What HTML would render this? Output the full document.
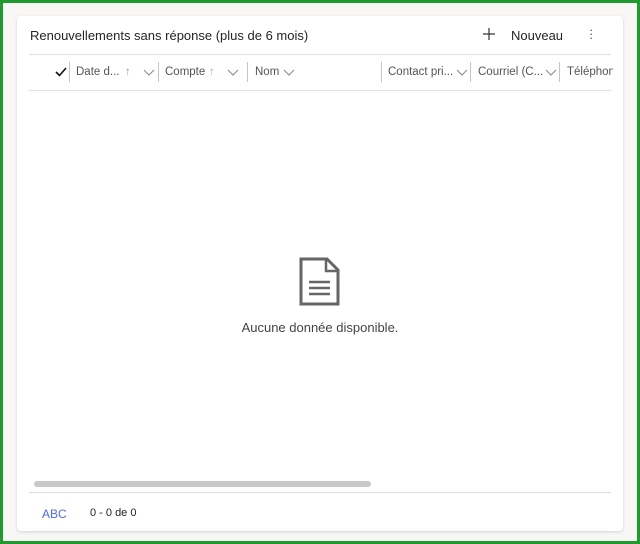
<!DOCTYPE html>
<html><head><meta charset="utf-8"><style>
*{margin:0;padding:0;box-sizing:border-box}
html,body{width:640px;height:544px;overflow:hidden}
body{background:#f8f7f6;border:3px solid #1f9a2e;font-family:"Liberation Sans",sans-serif;position:relative}
.card{position:absolute;left:14px;top:13px;width:606px;height:515px;background:#fff;border-radius:4px;box-shadow:0 1px 3px rgba(0,0,0,.15)}
.a{position:absolute;white-space:nowrap}
.h{font-size:11.5px;color:#555;top:49px;line-height:14px}
.sep{position:absolute;top:46px;width:1px;height:20px;background:#c8c6c4}
.chev{position:absolute;top:53px}
</style></head><body>
<div class="card">
<div class="a" style="left:13px;top:12px;font-size:13px;color:#242424">Renouvellements sans réponse (plus de 6 mois)</div>
<svg class="a" style="left:465px;top:11px" width="14" height="14"><path d="M7 1v12M1 7h12" stroke="#333" stroke-width="1.2"/></svg>
<div class="a" style="left:494px;top:12px;font-size:13px;color:#242424">Nouveau</div>
<div class="a" style="left:572px;top:12px;font-size:13px;color:#555;line-height:4px">·<br>·<br>·</div>
<div class="a" style="left:12px;top:38px;width:582px;height:1px;background:#e1dfdd"></div>
<svg class="a" style="left:38px;top:51px" width="12" height="10"><path d="M1 5l3.5 3.5L11 1" stroke="#111" stroke-width="1.6" fill="none"/></svg>
<div class="sep" style="left:52px"></div>
<div class="a h" style="left:59px">Date d...</div>
<div class="a h" style="left:108px;color:#999">↑</div>
<svg class="chev" style="left:126px" width="12" height="8"><path d="M1 1l5 5 5-5" stroke="#888" fill="none"/></svg>
<div class="sep" style="left:141px"></div>
<div class="a h" style="left:148px">Compte</div>
<div class="a h" style="left:192px;color:#c8a07a">↑</div>
<svg class="chev" style="left:210px" width="12" height="8"><path d="M1 1l5 5 5-5" stroke="#888" fill="none"/></svg>
<div class="sep" style="left:230px"></div>
<div class="a h" style="left:238px">Nom</div>
<svg class="chev" style="left:266px" width="12" height="8"><path d="M1 1l5 5 5-5" stroke="#888" fill="none"/></svg>
<div class="sep" style="left:364px"></div>
<div class="a h" style="left:371px">Contact pri...</div>
<svg class="chev" style="left:439px" width="12" height="8"><path d="M1 1l5 5 5-5" stroke="#888" fill="none"/></svg>
<div class="sep" style="left:453px"></div>
<div class="a h" style="left:461px">Courriel (C...</div>
<svg class="chev" style="left:528px" width="12" height="8"><path d="M1 1l5 5 5-5" stroke="#888" fill="none"/></svg>
<div class="sep" style="left:542px"></div>
<div class="a h" style="left:550px;width:46px;overflow:hidden">Téléphone</div>
<div class="a" style="left:12px;top:74px;width:582px;height:1px;background:#e1dfdd"></div>
<svg class="a" style="left:282px;top:241px" width="42" height="50"><path d="M2 2h26l11 11v34H2z" stroke="#666" stroke-width="3" fill="none"/><path d="M27 2v12h12" stroke="#666" stroke-width="2.5" fill="none"/><path d="M10 25h21M10 31h21M10 37h21" stroke="#666" stroke-width="2.5"/></svg>
<div class="a" style="left:0;width:606px;text-align:center;top:304px;font-size:13px;color:#444">Aucune donnée disponible.</div>
<div class="a" style="left:17px;top:465px;width:337px;height:6px;border-radius:3px;background:#c8c8c8"></div>
<div class="a" style="left:12px;top:476px;width:582px;height:1px;background:#e1dfdd"></div>
<div class="a" style="left:25px;top:491px;font-size:12px;color:#4f6bed">ABC</div>
<div class="a" style="left:73px;top:491px;font-size:11px;color:#222">0 - 0 de 0</div>
</div>
</body></html>
